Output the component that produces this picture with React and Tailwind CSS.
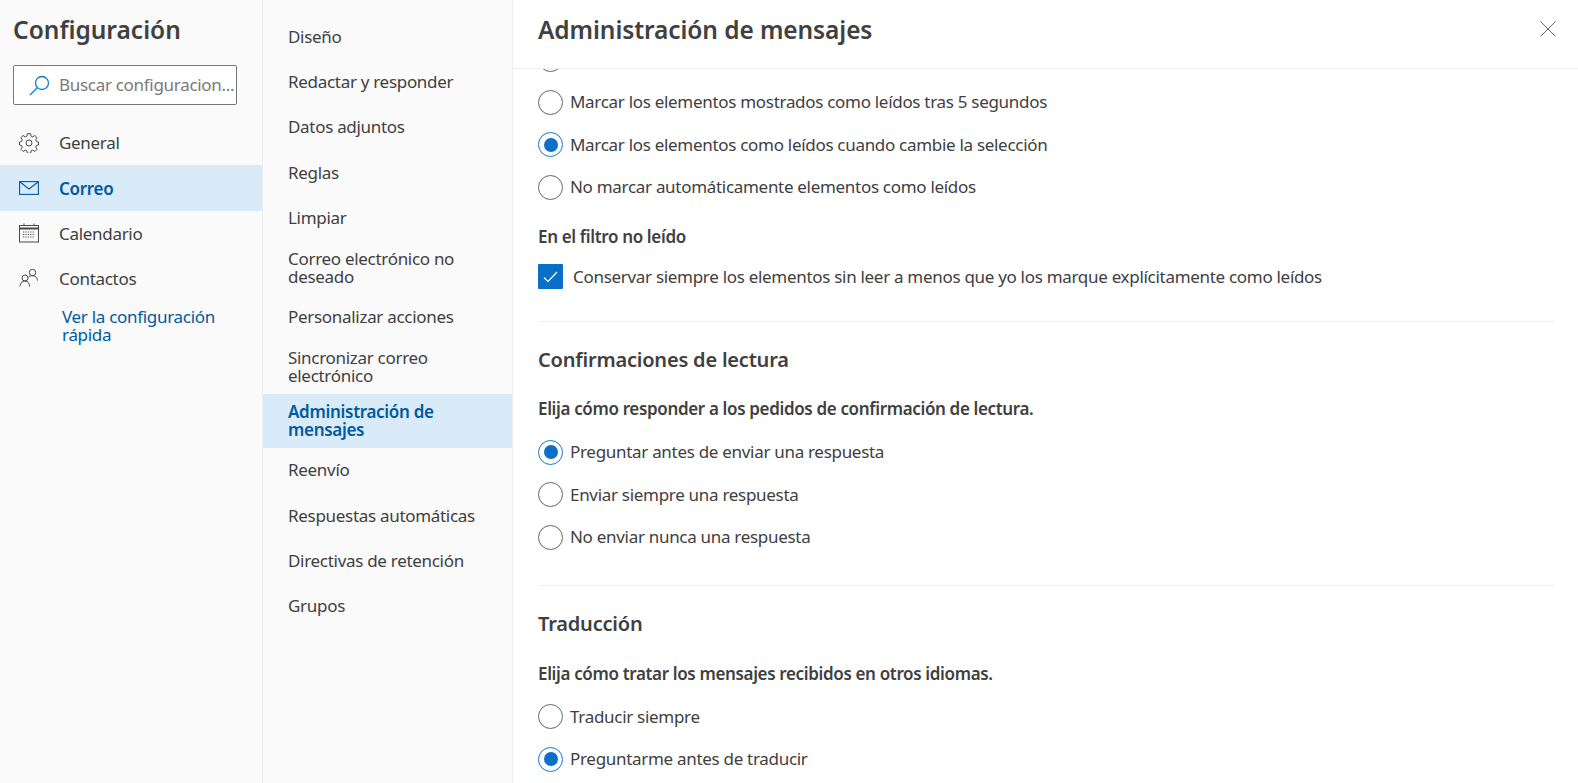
const F = "font-['Noto_Sans','Open_Sans',sans-serif]";

function Radio({ checked, label }) {
  return (
    <div className="flex items-center h-[42.5px]">
      <span className={`w-[25px] h-[25px] rounded-full border-[1.5px] bg-white flex items-center justify-center shrink-0 ${checked ? "border-[#0f78d4]" : "border-[#666666]"}`}>
        {checked && <span className="w-[14px] h-[14px] rounded-full bg-[#0a6fc7]" />}
      </span>
      <span className="ml-[7px] text-[17px] leading-[22px] text-[#404040] tracking-[-0.3px]">{label}</span>
    </div>
  );
}

const Gear = () => (
  <svg width="20" height="20" viewBox="0 0 20 20" fill="none" stroke="#4a4a4a" strokeWidth="1">
    <circle cx="10" cy="10" r="3" />
    <path d="M8.400 0.700h3.200l.5 2.500 1.600.7 2.200-1.400 2.200 2.200-1.400 2.200.7 1.600 2.100.5v3l-2.100.5-.7 1.600 1.400 2.200-2.200 2.200-2.200-1.400-1.600.7-.5 2.500H8.400l-.5-2.500-1.600-.7-2.200 1.400-2.200-2.200 1.400-2.200-.7-1.600-2.100-.5v-3l2.100-.5.7-1.600-1.400-2.200 2.200-2.200 2.200 1.400 1.600-.7z" />
  </svg>
);
const Mail = () => (
  <svg width="20" height="14" viewBox="0 0 20 14" fill="none" stroke="#005a9e" strokeWidth="1.1">
    <rect x="0.6" y="0.6" width="18.8" height="12.8" />
    <path d="M1 1l9 7 9-7" />
  </svg>
);
const Cal = () => (
  <svg width="20" height="20" viewBox="0 0 20 20" fill="none" stroke="#4a4a4a">
    <rect x="0.5" y="2.5" width="19" height="16.500" strokeWidth="1" />
    <path d="M0.5 5.5h19" strokeWidth="2" />
    <path d="M5 0.5v2M15 0.5v2" strokeWidth="1" />
    <path d="M4 9h12M4 11.5h12M4 14h12" strokeWidth="1.2" strokeDasharray="1.2 1.2" />
  </svg>
);
const People = () => (
  <svg width="20" height="20" viewBox="0 0 20 20" fill="none" stroke="#4a4a4a" strokeWidth="1">
    <circle cx="13.500" cy="4.500" r="3.200" />
    <circle cx="6" cy="10" r="3" />
    <path d="M1 18.500c0-3 2-5.500 5-5.500s4.500 2.500 4.500 5.500" />
    <path d="M9.500 9c1-1 2.500-1.300 4-1.300 2.500 0 5 1.800 5 5" />
  </svg>
);

function NavItem({ icon, label, active }) {
  return (
    <div className={`h-[45.25px] flex items-center rounded-r-[2px] ${active ? "bg-[#d9eaf8]" : ""}`}>
      <span className="w-[59px] pl-[19px] flex items-center shrink-0">{icon}</span>
      <span className={`pt-[1px] text-[17px] tracking-[-0.3px] ${active ? "text-[#005a9e] font-semibold" : "text-[#404040]"}`}>{label}</span>
    </div>
  );
}

function Sub({ children, active, two }) {
  return (
    <div className={`${two ? "h-[54px] pt-[1px]" : "h-[45.3px]"} pl-[25px] pr-[20px] flex items-center text-[17px] leading-[18px] tracking-[-0.3px] ${active ? "bg-[#d9eaf8] text-[#005a9e] font-semibold" : "text-[#404040]"}`}>
      <span>{children}</span>
    </div>
  );
}

const Heading = ({ children, cls }) => (
  <div className={`text-[20px] leading-[26px] font-semibold text-[#404040] tracking-[-0.2px] ${cls}`}>{children}</div>
);
const Bold = ({ children, cls }) => (
  <div className={`text-[17px] leading-[22px] font-semibold text-[#404040] tracking-[-0.35px] ${cls}`}>{children}</div>
);

export default function App() {
  return (
    <div className={`${F} flex h-[783px] w-[1578px] overflow-hidden bg-white`}>
      <aside className="w-[263px] shrink-0 bg-[#fafafa] border-r border-[#eeeeee]">
        <div className="pl-[13px] pt-[12px] text-[24.500px] leading-[36px] font-semibold text-[#404040]">Configuración</div>
        <div className="ml-[13px] mt-[17px] w-[224px] h-[40px] bg-white border border-[#777777] rounded-[2px] flex items-center">
          <svg className="ml-[15px] shrink-0" width="21" height="21" viewBox="0 0 21 21" fill="none" stroke="#0f78d4" strokeWidth="1.3">
            <circle cx="13" cy="8" r="6.500" />
            <path d="M8.500 12.500L1 20" />
          </svg>
          <span className="ml-[9px] text-[17px] tracking-[-0.3px] text-[#7a7a7a] whitespace-nowrap overflow-hidden">Buscar configuracion...</span>
        </div>
        <div className="mt-[15px]">
          <NavItem icon={<Gear />} label="General" />
          <NavItem icon={<Mail />} label="Correo" active />
          <NavItem icon={<Cal />} label="Calendario" />
          <NavItem icon={<People />} label="Contactos" />
        </div>
        <div className="pl-[62px] pr-[30px] pt-[7px] text-[17px] leading-[18px] tracking-[-0.3px] text-[#005a9e]">Ver la configuración rápida</div>
      </aside>
      <nav className="w-[250px] shrink-0 bg-[#fafafa] border-r border-[#eeeeee] pt-[14px]">
        <Sub>Diseño</Sub>
        <Sub>Redactar y responder</Sub>
        <Sub>Datos adjuntos</Sub>
        <Sub>Reglas</Sub>
        <Sub>Limpiar</Sub>
        <Sub two>Correo electrónico no deseado</Sub>
        <Sub>Personalizar acciones</Sub>
        <Sub two>Sincronizar correo electrónico</Sub>
        <Sub two active>Administración de mensajes</Sub>
        <Sub>Reenvío</Sub>
        <Sub>Respuestas automáticas</Sub>
        <Sub>Directivas de retención</Sub>
        <Sub>Grupos</Sub>
      </nav>
      <main className="flex-1 min-w-0 flex flex-col">
        <header className="h-[69px] shrink-0 border-b border-[#eeeeee] flex items-start justify-between pl-[25px] pr-[22px] bg-white relative z-10">
          <h1 className="mt-[12px] text-[24.500px] leading-[36px] font-semibold text-[#404040] tracking-[-0.1px]">Administración de mensajes</h1>
          <svg className="mt-[21px]" width="16" height="16" viewBox="0 0 16 16" stroke="#666666" strokeWidth="1" fill="none">
            <path d="M0.500 0.500l15 15M15.500 0.500l-15 15" />
          </svg>
        </header>
        <div className="flex-1 overflow-hidden pl-[25px] pr-[24px]">
          <div className="-mt-[30.500px]">
            <Radio label="" />
            <Radio label="Marcar los elementos mostrados como leídos tras 5 segundos" />
            <Radio checked label="Marcar los elementos como leídos cuando cambie la selección" />
            <Radio label="No marcar automáticamente elementos como leídos" />
            <Bold cls="mt-[17.500px]">En el filtro no leído</Bold>
            <div className="flex items-center mt-[16px]">
              <span className="w-[25px] h-[25px] bg-[#0a6fc7] rounded-[1px] flex items-center justify-center shrink-0">
                <svg width="15" height="12" viewBox="0 0 15 12" fill="none" stroke="#ffffff" strokeWidth="1.200"><path d="M1 6.500l4 4L14 1" /></svg>
              </span>
              <span className="ml-[10px] text-[17px] leading-[22px] text-[#404040] tracking-[-0.3px]">Conservar siempre los elementos sin leer a menos que yo los marque explícitamente como leídos</span>
            </div>
            <div className="border-t border-[#eeeeee] mt-[32px]" />
            <Heading cls="mt-[25px]">Confirmaciones de lectura</Heading>
            <Bold cls="mt-[25px]">Elija cómo responder a los pedidos de confirmación de lectura.</Bold>
            <div className="mt-[11px]">
              <Radio checked label="Preguntar antes de enviar una respuesta" />
              <Radio label="Enviar siempre una respuesta" />
              <Radio label="No enviar nunca una respuesta" />
            </div>
            <div className="border-t border-[#eeeeee] mt-[26.500px]" />
            <Heading cls="mt-[25px]">Traducción</Heading>
            <Bold cls="mt-[25.500px]">Elija cómo tratar los mensajes recibidos en otros idiomas.</Bold>
            <div className="mt-[11px]">
              <Radio label="Traducir siempre" />
              <Radio checked label="Preguntarme antes de traducir" />
            </div>
          </div>
        </div>
      </main>
    </div>
  );
}
